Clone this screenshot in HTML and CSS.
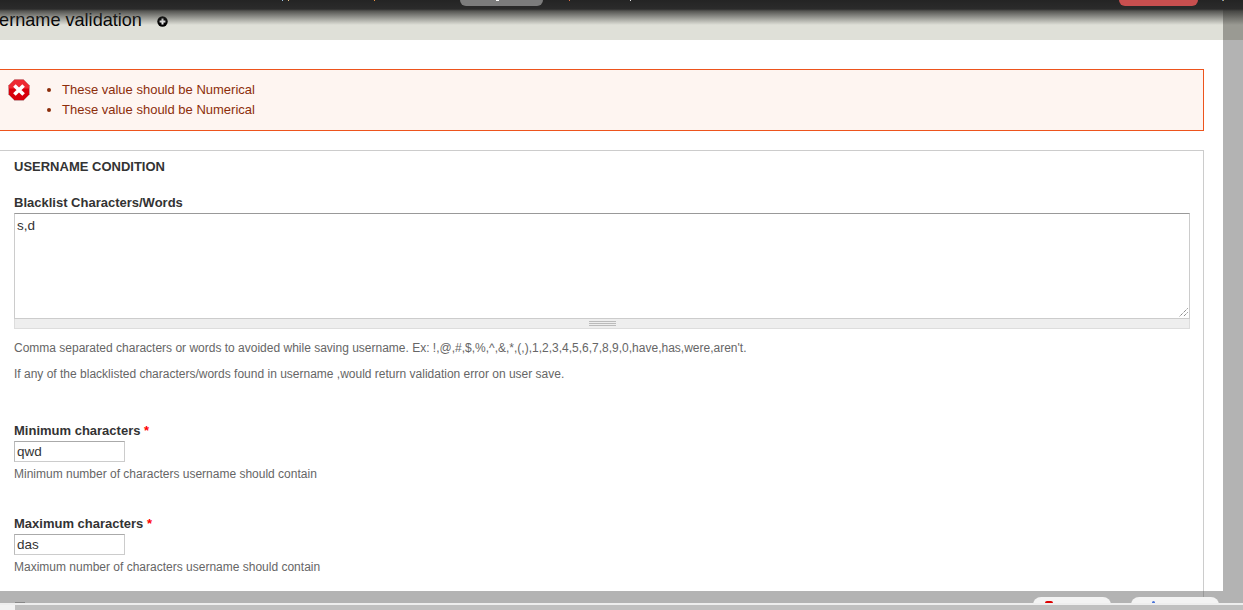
FILE: index.html
```html
<!DOCTYPE html>
<html lang="en">
<head>
    <meta charset="UTF-8">
    <meta name="viewport" content="width=device-width, initial-scale=1.0">
    <title>Username validation</title>
    <link rel="stylesheet" href="styles.css">
</head>
<body>
    <!-- Admin toolbar, mostly scrolled off the top -->
    <div class="toolbar">
        <span class="toolbar-flecks"></span>
        <span class="toolbar-tab"></span>
        <span class="toolbar-logout"></span>
    </div>

    <div class="overlay">
        <div class="dialog">
            <div class="title-bar">
                <h1>Username validation</h1>
                <svg class="add-icon" width="11" height="11" viewBox="0 0 11 11">
                    <circle cx="5.5" cy="5.5" r="5.2" fill="#000"/>
                    <path d="M5.5 2.6v5.8M2.6 5.5h5.8" stroke="#fff" stroke-width="2"/>
                </svg>
            </div>

            <div class="content">
                <div class="messages">
                    <svg class="error-icon" width="22" height="22" viewBox="0 0 22 22">
                        <path d="M6.5 0.5h9l6 6v9l-6 6h-9l-6-6v-9z" fill="#d8000c" stroke="#b8b8b8" stroke-width="0.6"/>
                        <path d="M6.5 0.8h9l5.7 5.7v3H0.8v-3z" fill="#ee2a33"/>
                        <path d="M6.4 6.4l9.2 9.2M15.6 6.4l-9.2 9.2" stroke="#fff" stroke-width="3.6"/>
                    </svg>
                    <ul>
                        <li>These value should be Numerical</li>
                        <li>These value should be Numerical</li>
                    </ul>
                </div>

                <div class="fieldset">
                    <h2>USERNAME CONDITION</h2>

                    <div class="form-item first">
                        <label>Blacklist Characters/Words</label>
                        <div class="textarea-box">s,d
                            <svg class="resizer" width="9" height="9" viewBox="0 0 9 9">
                                <path d="M8.5 0.5l-8 8M8.5 4.5l-4 4" stroke="#555" stroke-width="1" stroke-dasharray="1 1"/>
                            </svg>
                        </div>
                        <div class="grippie"><span></span></div>
                        <p class="description">Comma separated characters or words to avoided while saving username. Ex: !,@,#,$,%,^,&amp;,*,(,),1,2,3,4,5,6,7,8,9,0,have,has,were,aren't.</p>
                        <p class="description">If any of the blacklisted characters/words found in username ,would return validation error on user save.</p>
                    </div>

                    <div class="form-item minimum">
                        <label>Minimum characters <span class="required">*</span></label>
                        <div class="text-input">qwd</div>
                        <p class="description tight">Minimum number of characters username should contain</p>
                    </div>

                    <div class="form-item maximum">
                        <label>Maximum characters <span class="required">*</span></label>
                        <div class="text-input">das</div>
                        <p class="description tight">Maximum number of characters username should contain</p>
                    </div>
                </div>
            </div>
        </div>
        <div class="scroll-track">
            <div class="scroll-track-top"></div>
        </div>
    </div>

    <div class="footer">
        <span class="footer-mark"></span>
        <span class="fieldset-tail"></span>
        <div class="footer-actions">
            <span class="action-tab"><i class="dot red"></i></span>
            <span class="action-tab wide"><i class="dot blue"></i></span>
        </div>
    </div>
    <div class="footer-line"></div>
    <div class="footer-bottom"><div class="footer-bottom-bar"></div></div>
</body>
</html>
```

FILE: styles.css
```css
/* Page frame */
html, body {
    margin: 0;
    height: 610px;
    overflow: hidden;
}

body {
    position: relative;
    background-color: #b3b3b3;
    font-family: "Liberation Sans", Arial, sans-serif;
    font-size: 13px;
    color: #333;
}

/* Dark toolbar on top of the dialog */
.toolbar {
    position: absolute;
    top: 0;
    left: 0;
    right: 0;
    height: 25px;
    background: linear-gradient(to bottom, #242424 0, #2b2b2b 9px, rgba(50, 50, 48, 0.8) 11px, rgba(223, 224, 216, 0) 25px);
    z-index: 2;
}

.toolbar-tab,
.toolbar-logout {
    position: absolute;
    top: 0;
    height: 6px;
    border-radius: 0 0 8px 8px;
}

.toolbar-tab {
    left: 460px;
    width: 83px;
    background-color: #7c7c7c;
}

.toolbar-logout {
    left: 1119px;
    width: 79px;
    background-color: #c84f4f;
}

/* Bottoms of the toolbar letters that stick out past the top edge */
.toolbar-flecks {
    position: absolute;
    top: 0;
    left: 0;
    width: 1px;
    height: 1px;
    z-index: 1;
    box-shadow: 282px 0 #9fc6e8, 288px 0 #e8c080, 374px 0 #e89040, 496px 0 #fff, 497px 0 #fff, 498px 0 #fff, 569px 0 #e87040, 630px 0 #e8e8e8, 1222px 0 #5f8fc0, 1223px 0 #c0a060;
}

.overlay {
    display: flex;
    height: 591px;
}

.dialog {
    width: 1223px;
    overflow: hidden;
    background-color: #fff;
}

.title-bar {
    display: flex;
    align-items: center;
    height: 40px;
    box-sizing: border-box;
    background-color: #dfe0d8;
}

.title-bar h1 {
    margin: 0 0 0 -23px;
    font-size: 18.1px;
    font-weight: normal;
    color: #000;
}

.add-icon {
    margin-left: 15px;
    margin-top: 2px;
}

.scroll-track {
    width: 20px;
    background-color: #b3b3b3;
}

.scroll-track-top {
    height: 40px;
    background-color: #9a9a93;
}

.content {
    padding: 29px 19px 0 0;
}

/* Error box */
.messages {
    display: flex;
    height: 60px;
    margin-left: -10px;
    background-color: #fef5f1;
    border: 1px solid #ed541d;
    color: #8c2e0b;
}

.error-icon {
    margin: 9px 0 0 17px;
}

.messages ul {
    margin: 0;
    padding: 10px 0 0 32px;
    line-height: 20px;
}

/* Form */
.fieldset {
    margin: 19px 0 0 -1px;
    padding: 0 13px 0 14px;
    height: 500px;
    border: 1px solid #ccc;
}

.fieldset h2 {
    margin: 0;
    padding-top: 8px;
    font-size: 13px;
    line-height: 15px;
    color: #333;
}

.form-item label {
    display: block;
    font-weight: bold;
    line-height: 15px;
    color: #333;
}

.required {
    color: #f00;
}

.first {
    margin-top: 21px;
}

.minimum {
    margin-top: 42px;
}

.maximum {
    margin-top: 35px;
}

.textarea-box {
    position: relative;
    height: 99px;
    margin-top: 3px;
    padding: 3px 2px 2px;
    border: 1px solid #ccc;
    border-top-color: #999;
    font-size: 13.5px;
    line-height: 18px;
    color: #333;
}

.resizer {
    position: absolute;
    right: 1px;
    bottom: 1px;
}

.grippie {
    display: flex;
    justify-content: center;
    align-items: center;
    height: 9px;
    background-color: #eee;
    border: 1px solid #ddd;
    border-top: 0;
}

.grippie span {
    width: 27px;
    height: 5px;
    border-top: 1px solid #bbb;
    border-bottom: 1px solid #bbb;
    background: linear-gradient(#bbb, #bbb) center / 100% 1px no-repeat;
    box-sizing: border-box;
}

.description {
    margin: 12px 0 0;
    font-size: 12px;
    line-height: 14px;
    color: #666;
}

.description.tight {
    margin-top: 5px;
}

.text-input {
    width: 107px;
    height: 19px;
    margin-top: 3px;
    padding-left: 2px;
    border: 1px solid #ccc;
    border-top-color: #aaa;
    border-left-color: #bbb;
    font-size: 13.5px;
    line-height: 20px;
    color: #333;
}

/* Bottom of the overlay */
.footer {
    position: relative;
    display: flex;
    justify-content: flex-end;
    height: 12px;
    padding-right: 24px;
    overflow: hidden;
}

.footer-mark {
    position: absolute;
    left: 15px;
    bottom: 0;
    width: 10px;
    height: 1px;
    background-color: #888;
}

.fieldset-tail {
    position: absolute;
    left: 1203px;
    top: 0;
    width: 1px;
    height: 6px;
    background-color: #999;
}

.footer-actions {
    display: flex;
    gap: 20px;
    padding-top: 6px;
}

.action-tab {
    display: block;
    width: 78px;
    height: 6px;
    padding-top: 4px;
    border-radius: 8px 8px 0 0;
    background-color: #f3f3f3;
}

.action-tab.wide {
    width: 88px;
}

.dot {
    display: block;
    height: 2px;
    border-radius: 2px 2px 0 0;
}

.dot.red {
    width: 8px;
    margin-left: 12px;
    background-color: #d00;
}

.dot.blue {
    width: 3px;
    margin-left: 21px;
    background-color: #4a74d8;
}

.footer-line {
    height: 2px;
    background-color: #eee;
}

.footer-bottom {
    height: 5px;
    background-color: #f2f2f2;
    padding-left: 15px;
}

.footer-bottom-bar {
    height: 5px;
    background-color: #c0c0c0;
}
```
